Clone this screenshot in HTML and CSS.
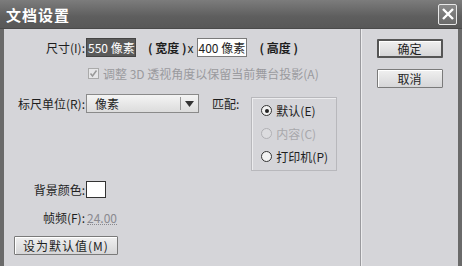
FILE: index.html
```html
<!DOCTYPE html>
<html lang="zh-CN">
<head>
  <meta charset="UTF-8">
  <title>文档设置</title>
  <link rel="stylesheet" href="styles.css">
</head>
<body>
  <div class="window">
    <div class="titlebar">
      <span class="title">文档设置</span>
      <span class="close">
        <svg width="14" height="14" viewBox="0 0 14 14"><path d="M2 2 L12 12 M12 2 L2 12" stroke="#fff" stroke-width="2.4" fill="none"/></svg>
      </span>
    </div>
    <div class="frame">
      <div class="main">
        <div class="row row-size">
          <span class="label">尺寸(I):</span>
          <span class="field selected">550 像素</span>
          <span class="note">( 宽度 )<span class="x">x</span></span>
          <span class="field">400 像素</span>
          <span class="note note-h">( 高度 )</span>
        </div>
        <div class="row row-check">
          <span class="checkbox">
            <svg width="11" height="11" viewBox="0 0 11 11"><rect x="0.5" y="0.5" width="10" height="10" fill="#e6e6e8" stroke="#aaa"/><path d="M2.5 5.5 L4.5 8 L8.5 2.5" stroke="#999" stroke-width="1.5" fill="none"/></svg>
          </span>
          <span class="muted">调整 3D 透视角度以保留当前舞台投影(A)</span>
        </div>
        <div class="row row-unit">
          <span class="label">标尺单位(R):</span>
          <span class="select">
            <span class="select-text">像素</span>
            <span class="select-arrow">
              <svg width="9" height="6" viewBox="0 0 9 6"><path d="M0 0 L9 0 L4.5 6 Z" fill="#333"/></svg>
            </span>
          </span>
          <span class="match">匹配:</span>
          <div class="group">
            <div class="radio"><span class="dot on"></span>默认(E)</div>
            <div class="radio disabled"><span class="dot"></span>内容(C)</div>
            <div class="radio"><span class="dot"></span>打印机(P)</div>
          </div>
        </div>
        <div class="row row-bg">
          <span class="label">背景颜色:</span>
          <span class="swatch"></span>
        </div>
        <div class="row row-fps">
          <span class="label">帧频(F):</span>
          <span class="fps">24.00</span>
        </div>
        <div class="row row-default">
          <button class="btn btn-wide">设为默认值(M)</button>
        </div>
      </div>
      <div class="side">
        <button class="btn btn-default">确定</button>
        <button class="btn">取消</button>
      </div>
    </div>
  </div>
</body>
</html>
```

FILE: styles.css
```css
body {
  margin: 0;
  padding: 0;
  background-color: #d5d5d9;
  font-family: "Noto Sans CJK SC", "Noto Sans", sans-serif;
  font-size: 12px;
  color: #1e1e1e;
}
.window {
  width: 462px;
  height: 266px;
  display: flex;
  flex-direction: column;
  overflow: hidden;
}
.titlebar {
  height: 28px;
  flex: none;
  display: flex;
  align-items: center;
  justify-content: space-between;
  padding: 0 5px 0 6px;
  background: linear-gradient(#7c7c7c, #5e5e5e 60%, #585858);
  border-bottom: 1px solid #4a4a4a;
}
.title {
  color: #fff;
  font-size: 15px;
  font-weight: bold;
  letter-spacing: 1px;
}
.close {
  width: 17px;
  height: 19px;
  display: flex;
  align-items: center;
  justify-content: center;
  border: 1px solid #e8e8e8;
  border-radius: 2px;
  background: linear-gradient(#8a8a8a, #6a6a6a);
}
.frame {
  flex: 1;
  display: flex;
  border-left: 4px solid #6a6a6a;
  border-right: 4px solid #6a6a6a;
  background-color: #d5d5d9;
}
.main {
  width: 356px;
  padding-top: 9px;
  border-right: 1px solid #9a9a9e;
  box-shadow: 1px 0 0 #ececee;
}
.side {
  flex: 1;
  display: flex;
  flex-direction: column;
  align-items: center;
  padding: 10px 0 0 0;
  gap: 11px;
}
.row {
  display: flex;
  align-items: center;
}
.label {
  width: 81px;
  flex: none;
  text-align: right;
}
.field {
  width: 47px;
  height: 17px;
  margin-left: 1px;
  padding-left: 1px;
  line-height: 17px;
  border: 1px solid #7a7a7a;
  background: #fff;
  white-space: nowrap;
  overflow: hidden;
}
.field.selected {
  background: #5a5a5a;
  color: #fff;
  border-color: #444;
}
.note {
  margin: 0 2px 0 12px;
  font-weight: bold;
  white-space: pre;
}
.note .x {
  font-weight: normal;
  margin-left: 1px;
}
.note-h {
  margin-left: 13px;
}
.row-check {
  margin-top: 8px;
  padding-left: 84px;
}
.checkbox {
  display: flex;
  margin-right: 4px;
}
.muted {
  color: #9a9a9e;
}
.row-unit {
  margin-top: 12px;
  align-items: flex-start;
}
.row-unit .label {
  padding-top: 1px;
}
.select {
  width: 111px;
  height: 17px;
  display: flex;
  margin-left: 1px;
  border: 1px solid #8a8a8a;
  background: linear-gradient(#f4f4f4, #dcdcdc);
}
.select-text {
  flex: 1;
  padding-left: 8px;
  border-right: 1px solid #999;
  margin: 2px 0;
  line-height: 13px;
}
.select-arrow {
  width: 17px;
  display: flex;
  align-items: center;
  justify-content: center;
}
.match {
  margin-left: 13px;
  padding-top: 1px;
}
.group {
  width: 86px;
  height: 74px;
  margin: 3px 0 0 12px;
  padding: 3px 0 0 9px;
  border: 1px solid #b8b8bc;
  box-shadow: 1px 1px 0 #ececee inset;
  display: flex;
  flex-direction: column;
  gap: 4px;
  box-sizing: border-box;
}
.radio {
  display: flex;
  align-items: center;
  height: 19px;
}
.radio.disabled {
  color: #a8a8ac;
}
.dot {
  width: 9px;
  height: 9px;
  border: 1px solid #333;
  border-radius: 50%;
  background: #f2f2f2;
  margin-right: 4px;
  position: relative;
}
.radio.disabled .dot {
  border-color: #b0b0b4;
  background: #dcdcdf;
}
.dot.on::after {
  content: "";
  position: absolute;
  left: 2.5px;
  top: 2.5px;
  width: 4px;
  height: 4px;
  border-radius: 50%;
  background: #222;
}
.row-bg {
  margin-top: 10px;
}
.swatch {
  width: 18px;
  height: 15px;
  margin-left: 1px;
  border: 1px solid #333;
  background: #fff;
}
.row-fps {
  margin-top: 11px;
}
.fps {
  margin-left: 2px;
  color: #8a8a90;
  border-bottom: 1px dotted #8a8a90;
  line-height: 13px;
}
.row-default {
  margin-top: 10px;
  padding-left: 10px;
}
.btn {
  font-family: "Noto Sans CJK SC", "Noto Sans", sans-serif;
  font-size: 12px;
  color: #1e1e1e;
  height: 19px;
  padding: 0;
  line-height: 15px;
  border: 1px solid #7a7a7a;
  border-radius: 1px;
  background: linear-gradient(#f0f0f0, #d6d6d8);
  box-shadow: inset 1px 1px 0 #fff;
}
.side .btn {
  width: 66px;
}
.btn-default {
  border: 2px solid #555;
}
.btn-wide {
  width: 104px;
  letter-spacing: 1px;
}
```
